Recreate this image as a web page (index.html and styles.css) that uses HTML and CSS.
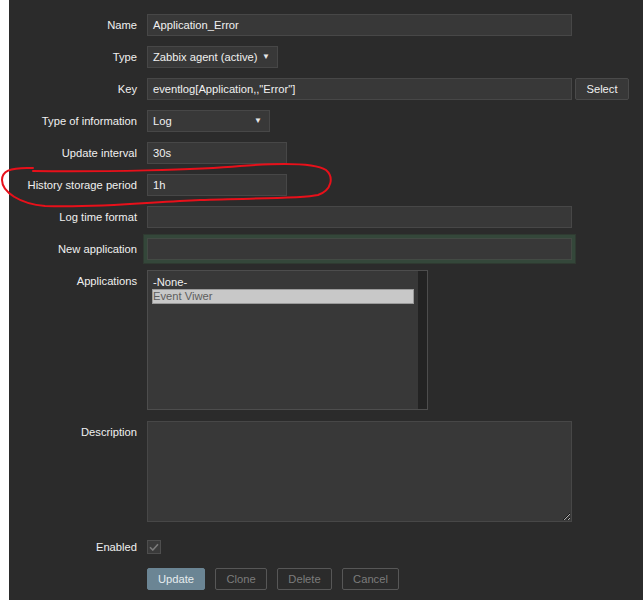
FILE: index.html
```html
<!DOCTYPE html>
<html>
<head>
<meta charset="utf-8">
<link rel="stylesheet" href="styles.css">
</head>
<body>
<div class="page">
  <form class="form">
    <label class="lbl">Name</label>
    <div class="field"><div class="input w-full">Application_Error</div></div>

    <label class="lbl">Type</label>
    <div class="field"><div class="input select w-type"><span>Zabbix agent (active)</span><span class="arrow">▼</span></div></div>

    <label class="lbl">Key</label>
    <div class="field row"><div class="input w-full">eventlog[Application,,"Error"]</div><button type="button" class="btn-select">Select</button></div>

    <label class="lbl">Type of information</label>
    <div class="field"><div class="input select w-info"><span>Log</span><span class="arrow">▼</span></div></div>

    <label class="lbl">Update interval</label>
    <div class="field"><div class="input w-short">30s</div></div>

    <label class="lbl">History storage period</label>
    <div class="field"><div class="input w-short">1h</div></div>

    <label class="lbl">Log time format</label>
    <div class="field"><div class="input w-full"></div></div>

    <label class="lbl">New application</label>
    <div class="field"><div class="input w-full focused"></div></div>

    <label class="lbl">Applications</label>
    <div class="field">
      <div class="listbox">
        <div class="options">
          <div class="opt">-None-</div>
          <div class="opt selected">Event Viwer</div>
        </div>
        <div class="scroll"></div>
      </div>
    </div>

    <label class="lbl lbl-desc">Description</label>
    <div class="field field-desc"><textarea class="textarea"></textarea></div>

    <label class="lbl lbl-enabled">Enabled</label>
    <div class="field field-enabled">
      <span class="checkbox"><svg width="10" height="8" viewBox="0 0 10 8"><path d="M1 4.2 L3.8 7 L9 1.2" fill="none" stroke="#7b7b7b" stroke-width="1.6"/></svg></span>
    </div>

    <div></div>
    <div class="field buttons">
      <button type="button" class="btn primary">Update</button>
      <button type="button" class="btn ghost b-clone">Clone</button>
      <button type="button" class="btn ghost b-delete">Delete</button>
      <button type="button" class="btn ghost b-cancel">Cancel</button>
    </div>
  </form>
  <svg class="annot" width="643" height="600" viewBox="0 0 643 600">
    <path d="M33 171 C 100 172, 200 170, 240 166 C 280 163, 315 163, 326 170 C 334 177, 332 190, 318 195 C 300 199, 250 198, 200 200 C 150 202, 100 208, 45 206 C 20 204, 2 192, 2 180 C 2 172, 8 167, 33 168" fill="none" stroke="#e8101a" stroke-width="2" stroke-linecap="round" stroke-linejoin="round"/>
  </svg>
</div>
</body>
</html>
```

FILE: styles.css
```css
html, body {
  margin: 0;
  padding: 0;
  background: #ffffff;
}
body {
  font-family: "Liberation Sans", Arial, sans-serif;
  font-size: 11.2px;
}
.page {
  position: relative;
  margin-left: 9px;
  background: #2b2b2b;
  min-height: 600px;
  padding-top: 14px;
  box-sizing: border-box;
}
.form {
  display: grid;
  grid-template-columns: 128px 1fr;
  column-gap: 10px;
  row-gap: 10px;
  margin: 0;
}
.lbl {
  color: #f0f0f0;
  text-align: right;
  line-height: 22px;
  white-space: nowrap;
}
.field {
  display: flex;
  align-items: flex-start;
}
.row { gap: 3px; }
.input {
  box-sizing: border-box;
  height: 22px;
  background: #383838;
  border: 1px solid #474747;
  color: #f0f0f0;
  line-height: 20px;
  padding: 0 5px;
  white-space: nowrap;
}
.w-full { width: 425px; }
.w-type { width: 131px; }
.w-info { width: 123px; }
.w-short { width: 140px; }
.select {
  display: flex;
  justify-content: space-between;
  align-items: center;
  padding-right: 7px;
}
.arrow {
  font-size: 8px;
  color: #e8e8e8;
  line-height: 20px;
}
.focused {
  box-shadow: 0 0 0 3px #34473a, 0 0 0 4px #2f3a31;
  border-color: #434a44;
}
.btn-select {
  box-sizing: border-box;
  height: 22px;
  width: 54px;
  background: #383838;
  border: 1px solid #4a4a4a;
  border-radius: 2px;
  color: #f0f0f0;
  font-family: inherit;
  font-size: 11.2px;
  padding: 0;
}
.listbox {
  box-sizing: border-box;
  width: 281px;
  height: 140px;
  background: #383838;
  border: 1px solid #4d4d4d;
  display: flex;
}
.options {
  flex: 1;
  padding: 4px 4px 0 4px;
}
.opt {
  color: #f0f0f0;
  height: 14px;
  line-height: 14px;
  padding-left: 1px;
}
.opt.selected {
  background: #c8c8c8;
  color: #5e5e5e;
  border: 1px solid #9a9a9a;
  height: 13px;
  line-height: 13px;
  padding-left: 0;
}
.scroll {
  width: 9px;
  background: #232323;
}
.lbl-desc, .field-desc {
  margin-top: 1px;
}
.textarea {
  box-sizing: border-box;
  width: 425px;
  height: 101px;
  margin: 0;
  background: #383838;
  border: 1px solid #474747;
  color: #f0f0f0;
  font-family: inherit;
  font-size: 11.2px;
  padding: 4px;
  outline: none;
}
.lbl-enabled {
  margin-top: 4px;
}
.field-enabled {
  margin-top: 4px;
  height: 22px;
  align-items: center;
}
.checkbox {
  box-sizing: border-box;
  width: 14px;
  height: 14px;
  background: #3a3a3a;
  border: 1px solid #4e4e4e;
  display: flex;
  align-items: center;
  justify-content: center;
}
.buttons {
  gap: 10px;
}
.btn {
  box-sizing: border-box;
  height: 22px;
  border-radius: 2px;
  font-family: inherit;
  font-size: 11.2px;
  padding: 0;
}
.primary {
  width: 58px;
  background: #6b8594;
  border: 1px solid #6b8594;
  color: #e6ecef;
}
.ghost {
  background: transparent;
  border: 1px solid #575757;
  color: #7c7c7c;
}
.b-clone { width: 52px; }
.b-delete { width: 55px; }
.b-cancel { width: 57px; }
.annot {
  position: absolute;
  left: -9px;
  top: 0;
  pointer-events: none;
}
```
